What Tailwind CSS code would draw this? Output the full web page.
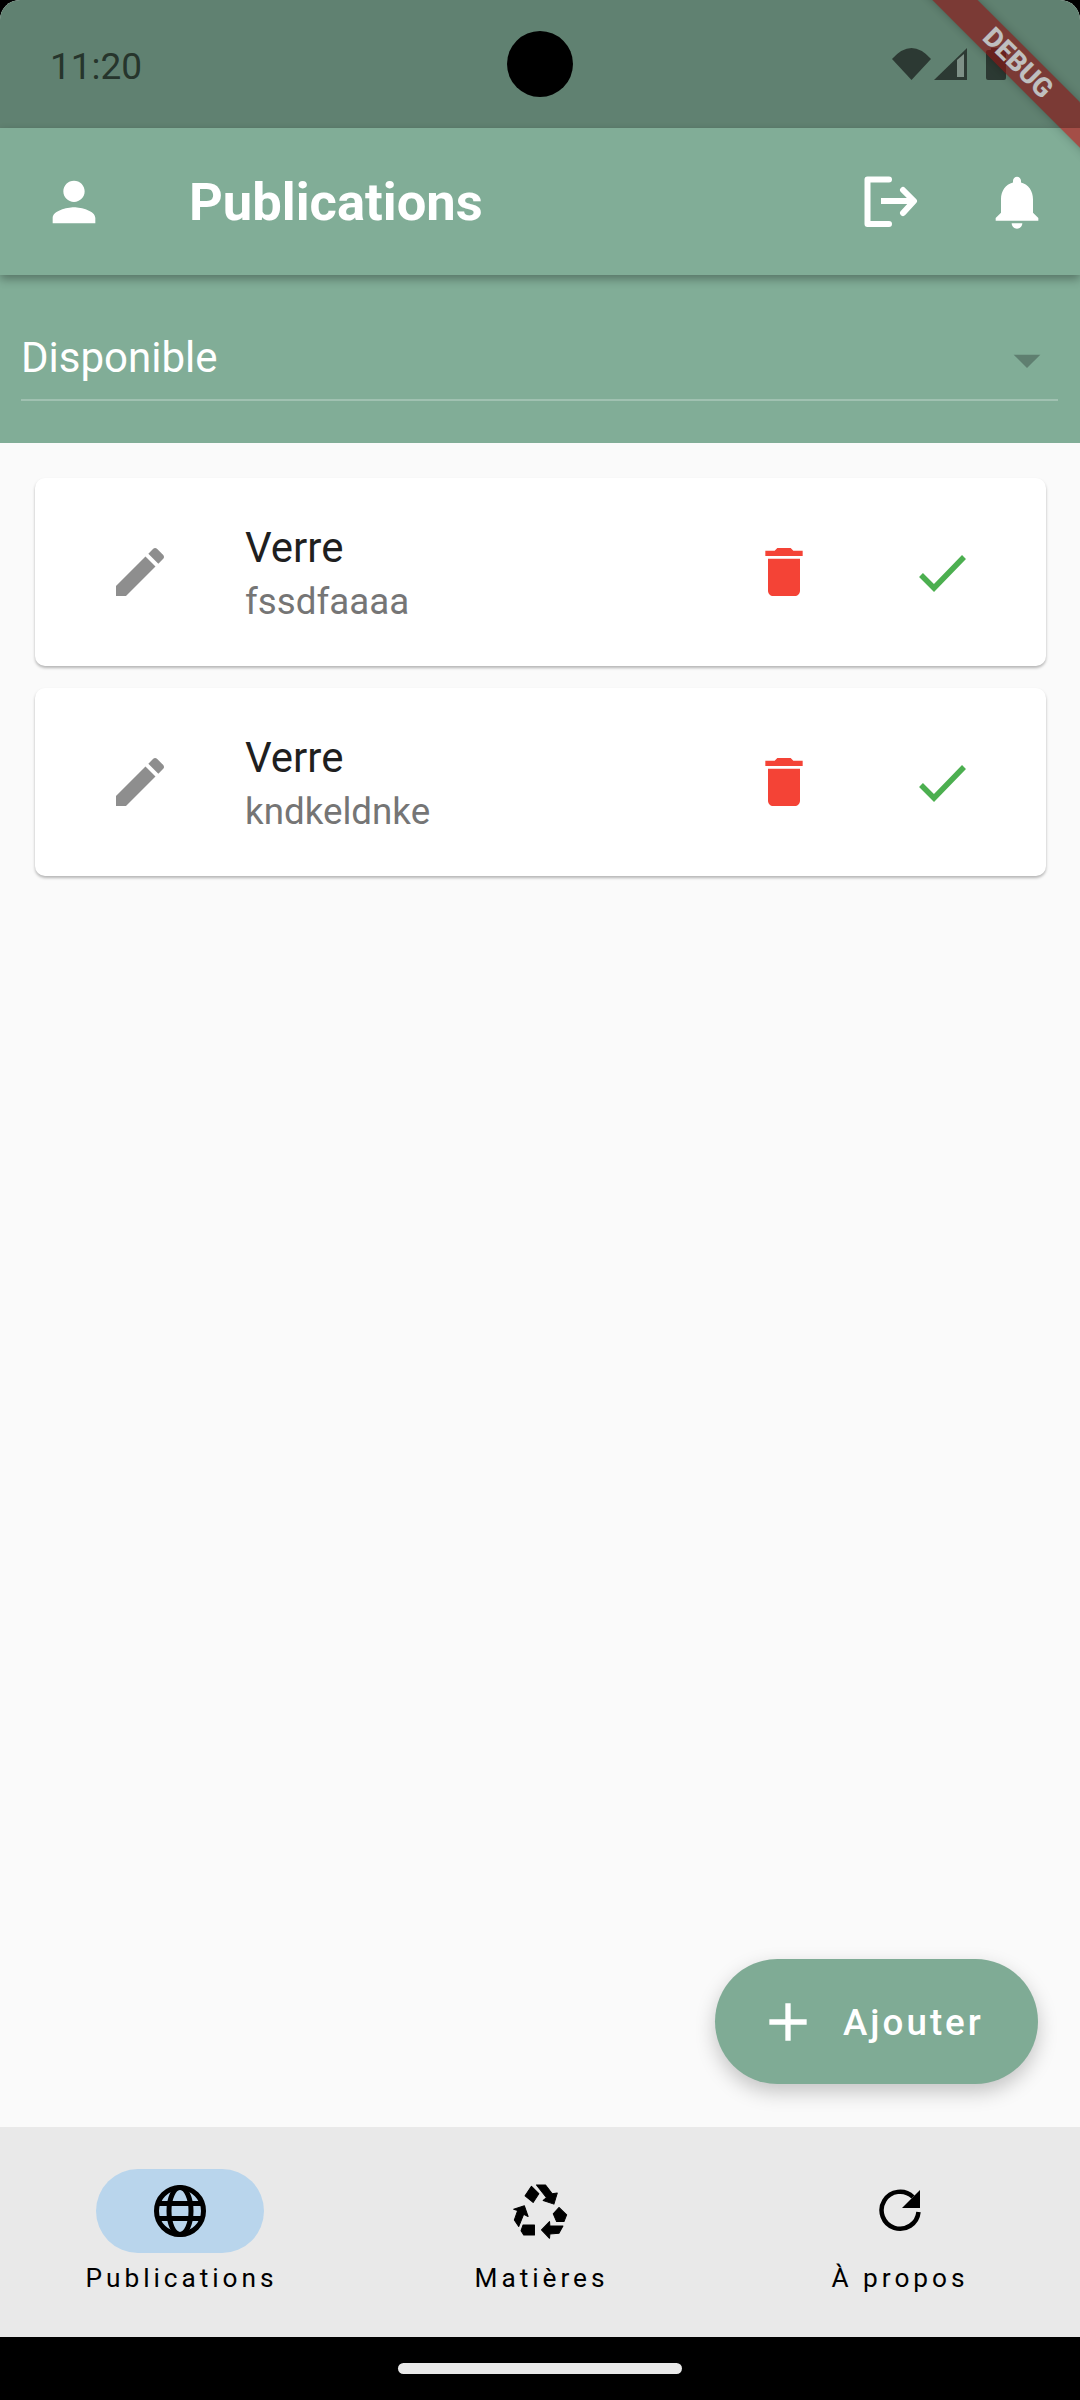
<!DOCTYPE html>
<html lang="fr">
<head>
    <meta charset="UTF-8">
    <meta name="viewport" content="width=device-width, initial-scale=1.0">
    <title>Publications</title>
    <script src="https://cdn.jsdelivr.net/npm/@tailwindcss/browser@4"></script>
</head>
<body class="bg-black font-['Roboto',sans-serif]">
    <div class="w-[1080px] h-[2400px] bg-black flex flex-col">
        <div class="relative flex-1 flex flex-col overflow-hidden rounded-t-[20px] bg-[#fafafa]">

            <!-- status bar -->
            <div class="h-[128px] shrink-0 bg-[#81ad97] flex items-center pl-[50px] pr-[74px]">
                <span class="flex-1 pt-[6px] text-[37px] text-[#33473b]">11:20</span>
                <svg class="w-[39px] h-[32px]" viewBox="0 0 39 32" fill="#3b4d44"><path d="M19.5 32 0 11Q19.5-11 39 11Z"/></svg>
                <svg class="w-[33px] h-[32px] ml-[3px]" viewBox="0 0 33 32"><path fill="#3b4d44" d="M0 32 33 0V32Z"/><path fill="#a9c0b4" d="M23 12 30 6V29H23Z"/></svg>
                <svg class="w-[20px] h-[32px] ml-[19px]" viewBox="0 0 20 32" fill="#3b4d44"><path d="M5 0h10v2h3q2 0 2 2v26q0 2-2 2H2q-2 0-2-2V4q0-2 2-2h3z"/></svg>
            </div>

            <!-- app bar -->
            <header class="relative z-[5] h-[147px] shrink-0 bg-[#81ad97] flex items-center pl-[42px] pr-[31px] shadow-[0_4px_9px_rgba(0,0,0,0.33)]">
                <svg class="w-[64px] h-[64px]" viewBox="0 0 24 24" fill="white"><path d="M12 12c2.21 0 4-1.79 4-4s-1.79-4-4-4-4 1.79-4 4 1.79 4 4 4zm0 2c-2.67 0-8 1.34-8 4v2h16v-2c0-2.66-5.33-4-8-4z"/></svg>
                <h1 class="flex-1 ml-[83px] pt-[2px] text-[52.5px] font-bold text-white">Publications</h1>
                <svg class="w-[56px] h-[52px]" viewBox="0 0 56 52" fill="none" stroke="white" stroke-width="6" stroke-linejoin="round" stroke-linecap="round"><path d="M27 3.500H5.500V48H27"/><path stroke-linecap="butt" d="M19 25H52"/><path d="M41 14 52 25 41 37"/></svg>
                <svg class="w-[64px] h-[64px] ml-[67px]" viewBox="0 0 24 24" fill="white"><path d="M12 22c1.100 0 2-.9 2-2h-4c0 1.100.89 2 2 2zm6-6v-5c0-3.070-1.640-5.640-4.500-6.320V4c0-.83-.67-1.500-1.500-1.500s-1.500.67-1.500 1.500v.68C7.630 5.360 6 7.920 6 11v5l-2 2v1h16v-1l-2-2z"/></svg>
            </header>

            <!-- filter dropdown -->
            <div class="h-[168px] shrink-0 bg-[#81ad97] pl-[21px] pr-[22px] pt-[40px]">
                <div class="h-[86px] flex items-center justify-between border-b-2 border-white/25">
                    <span class="text-[42px] text-white">Disponible</span>
                    <svg class="w-[64px] h-[64px] mt-[6px] -mr-[1px]" viewBox="0 0 24 24" fill="#5f7f70"><path d="M7 10l5 5 5-5z"/></svg>
                </div>
            </div>

            <!-- list -->
            <main class="relative flex-1 pl-[35px] pr-[34px] pt-[35px] flex flex-col gap-[22px]">
                <div class="h-[188px] bg-white rounded-[10px] shadow-[0_2px_3px_rgba(0,0,0,0.28)] flex items-center pl-[73px] pr-[71px]">
                    <svg class="w-[64px] h-[64px]" viewBox="0 0 24 24" fill="#8e8e8e"><path d="M3 17.250V21h3.750L17.810 9.940l-3.750-3.750L3 17.250zM20.710 7.040c.39-.39.39-1.020 0-1.410l-2.340-2.340c-.39-.39-1.020-.39-1.410 0l-1.830 1.830 3.750 3.750 1.830-1.830z"/></svg>
                    <div class="flex-1 ml-[73px] pt-[5px]">
                        <p class="text-[42px] leading-[50px] text-[#1f1f1f]">Verre</p>
                        <p class="text-[36.75px] leading-[50px] mt-[4px] text-[#757575]">fssdfaaaa</p>
                    </div>
                    <svg class="w-[64px] h-[64px]" viewBox="0 0 24 24" fill="#f44336"><path d="M6 19c0 1.100.9 2 2 2h8c1.100 0 2-.9 2-2V7H6v12zM19 4h-3.500l-1-1h-5l-1 1H5v2h14V4z"/></svg>
                    <svg class="w-[64px] h-[64px] ml-[95px]" viewBox="0 0 64 64" fill="none" stroke="#4caf50" stroke-width="5.500"><path d="M10 35 23 48 53 17"/></svg>
                </div>
                <div class="h-[188px] bg-white rounded-[10px] shadow-[0_2px_3px_rgba(0,0,0,0.28)] flex items-center pl-[73px] pr-[71px]">
                    <svg class="w-[64px] h-[64px]" viewBox="0 0 24 24" fill="#8e8e8e"><path d="M3 17.250V21h3.750L17.810 9.940l-3.750-3.750L3 17.250zM20.710 7.040c.39-.39.39-1.020 0-1.410l-2.340-2.340c-.39-.39-1.020-.39-1.410 0l-1.830 1.830 3.750 3.750 1.830-1.830z"/></svg>
                    <div class="flex-1 ml-[73px] pt-[5px]">
                        <p class="text-[42px] leading-[50px] text-[#1f1f1f]">Verre</p>
                        <p class="text-[36.75px] leading-[50px] mt-[4px] text-[#757575]">kndkeldnke</p>
                    </div>
                    <svg class="w-[64px] h-[64px]" viewBox="0 0 24 24" fill="#f44336"><path d="M6 19c0 1.100.9 2 2 2h8c1.100 0 2-.9 2-2V7H6v12zM19 4h-3.500l-1-1h-5l-1 1H5v2h14V4z"/></svg>
                    <svg class="w-[64px] h-[64px] ml-[95px]" viewBox="0 0 64 64" fill="none" stroke="#4caf50" stroke-width="5.500"><path d="M10 35 23 48 53 17"/></svg>
                </div>

                <button class="absolute right-[42px] bottom-[43px] w-[323px] h-[125px] rounded-full bg-[#7fab95] flex items-center pl-[41px] shadow-[0_8px_20px_rgba(0,0,0,0.22)]">
                    <svg class="w-[64px] h-[64px]" viewBox="0 0 24 24" fill="white"><path d="M19 13h-6v6h-2v-6H5v-2h6V5h2v6h6v2z"/></svg>
                    <span class="ml-[23px] pt-[2px] text-[36.75px] font-medium tracking-[3px] text-white">Ajouter</span>
                </button>
            </main>

            <!-- bottom navigation -->
            <nav class="h-[210px] shrink-0 bg-[#e9e9e9] grid grid-cols-3 pt-[42px]">
                <div class="flex flex-col items-center">
                    <div class="w-[168px] h-[84px] rounded-full bg-[#b9d5ec] flex items-center justify-center">
                        <svg class="w-[54px] h-[54px]" viewBox="0 0 54 54" fill="none" stroke="black" stroke-width="5"><circle cx="27" cy="27" r="23.500"/><ellipse cx="27" cy="27" rx="11" ry="23.500"/><path d="M4 19.500H50M4 34.500H50"/></svg>
                    </div>
                    <span class="mt-[8px] pl-[3px] text-[26.25px] leading-[34px] tracking-[3.950px] text-black">Publications</span>
                </div>
                <div class="flex flex-col items-center">
                    <div class="h-[84px] flex items-center justify-center">
                        <svg class="w-[57px] h-[57px]" viewBox="95 40 170 170" fill="black" stroke="black" stroke-width="3" stroke-linejoin="round"><path d="M134 78 153 50 175 72 158 98Z"/><path d="M168 46H195L215 72 230 70 220 103 188 92 198 84Z"/><path d="M235 113 258 135 250 155H228L218 132Z"/><path d="M247 168 235 190 208 192 207 205 183 180 207 155 208 168Z"/><path d="M128 165H162V195H130L122 182Z"/><path d="M100 118 132 108 143 140 130 133 115 170 102 150 112 122Z"/></svg>
                    </div>
                    <span class="mt-[8px] pl-[3px] text-[26.25px] leading-[34px] tracking-[3.950px] text-black">Matières</span>
                </div>
                <div class="flex flex-col items-center">
                    <div class="h-[84px] flex items-center justify-center">
                        <svg class="w-[44px] h-[46px]" viewBox="0 0 44 46" fill="none"><path stroke="black" stroke-width="4.500" d="M35 9A18.500 18.500 0 1 0 40.500 24"/><path fill="black" d="M42 2V20H24Z"/></svg>
                    </div>
                    <span class="mt-[8px] text-[26.25px] leading-[34px] tracking-[3.950px] text-black">À propos</span>
                </div>
            </nav>

            <!-- debug ribbon, sits under the status bar scrim -->
            <div class="absolute left-[868px] top-[47px] z-10 w-[300px] h-[32px] rotate-45 bg-[#b71c1c]/65 shadow-[0_0_10px_rgba(0,0,0,0.25)] flex items-center justify-center">
                <span class="text-[27px] font-extrabold text-white">DEBUG</span>
            </div>
            <div class="absolute inset-x-0 top-0 z-20 h-[128px] bg-black/25"></div>
            <div class="absolute left-[507px] top-[31px] z-30 w-[66px] h-[66px] rounded-full bg-black"></div>
        </div>

        <!-- gesture bar -->
        <div class="h-[63px] shrink-0 bg-black flex justify-center pt-[26px]">
            <div class="w-[284px] h-[11px] rounded-full bg-[#e9e9e9]"></div>
        </div>
    </div>
</body>
</html>
